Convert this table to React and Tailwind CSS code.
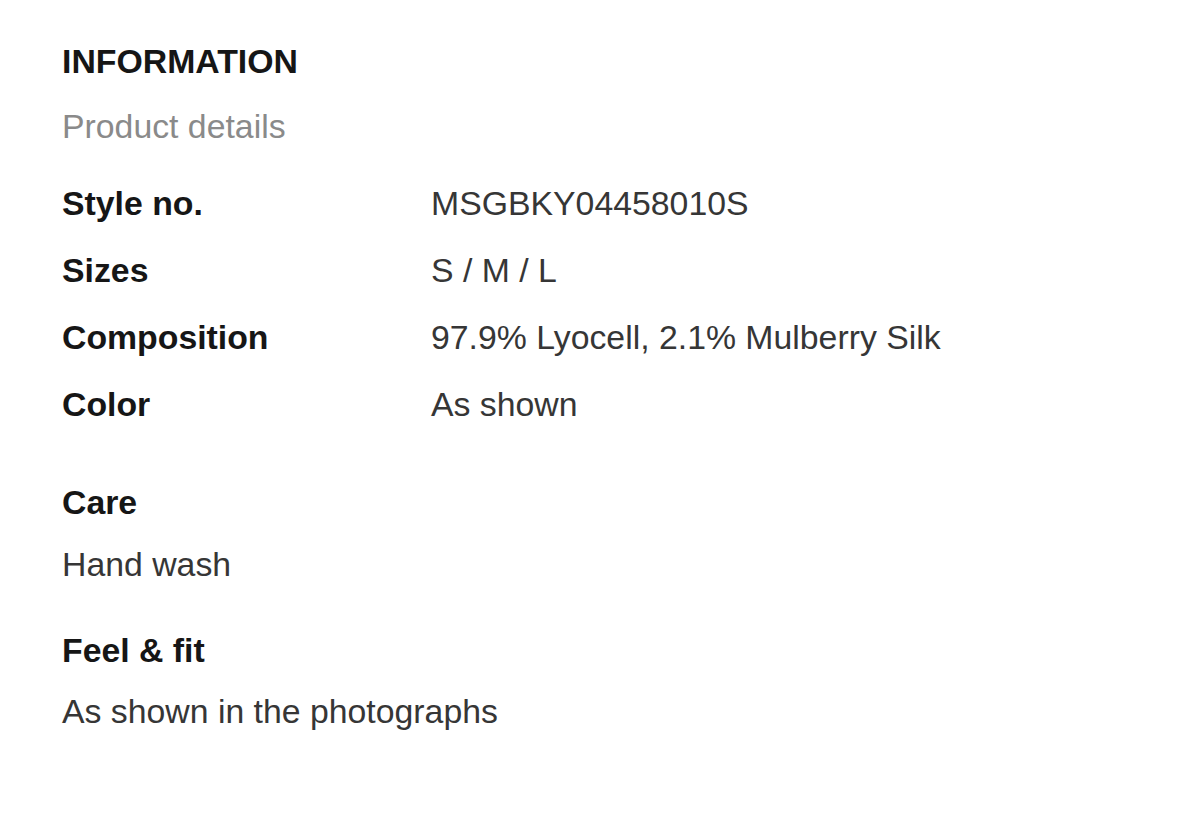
import React from 'react';

const details = [
  { label: 'Style no.', value: 'MSGBKY04458010S' },
  { label: 'Sizes', value: 'S / M / L' },
  { label: 'Composition', value: '97.9% Lyocell, 2.1% Mulberry Silk' },
  { label: 'Color', value: 'As shown' },
];

export default function App() {
  return (
    <div className="min-h-screen bg-white pl-[62px] pt-[41px] font-['Liberation_Sans',Arial,sans-serif] text-[33.8px] leading-[40px]">
      {/* Header */}
      <h2 className="font-bold text-[#161616]">INFORMATION</h2>
      <p className="mt-[25px] text-[#8a8a8a]">Product details</p>

      {/* Detail rows */}
      <dl className="mt-[37px] flex flex-col gap-[27px]">
        {details.map((d) => (
          <div key={d.label} className="flex">
            <dt className="w-[369px] shrink-0 font-bold text-[#161616]">{d.label}</dt>
            <dd className="text-[#363636]">{d.value}</dd>
          </div>
        ))}
      </dl>

      {/* Care */}
      <section className="mt-[58px]">
        <h3 className="font-bold text-[#161616]">Care</h3>
        <p className="mt-[22px] text-[#363636]">Hand wash</p>
      </section>

      {/* Feel & fit */}
      <section className="mt-[46px]">
        <h3 className="font-bold text-[#161616]">Feel &amp; fit</h3>
        <p className="mt-[21px] text-[#363636]">As shown in the photographs</p>
      </section>
    </div>
  );
}
